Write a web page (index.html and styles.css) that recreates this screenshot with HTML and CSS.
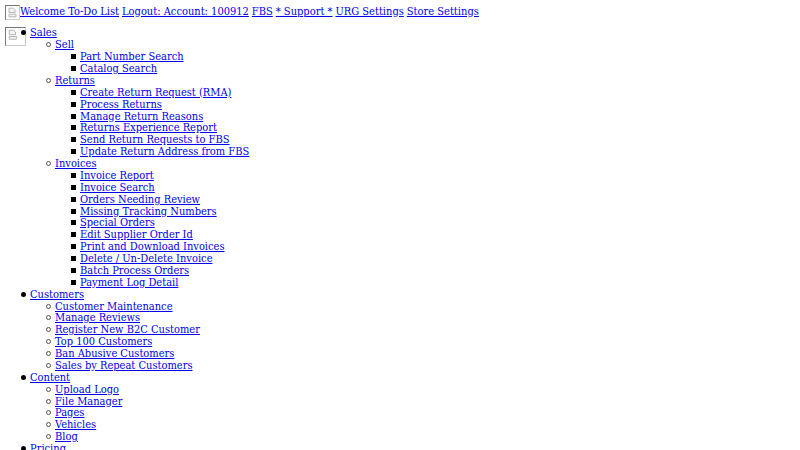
FILE: index.html
```html
<!DOCTYPE html>
<html lang="en">
<head>
  <meta charset="UTF-8">
  <title>Admin Menu</title>
  <link rel="stylesheet" href="styles.css">
</head>
<body>
  <svg class="defs" width="0" height="0">
    <symbol id="pic" viewBox="0 0 15 15">
      <path d="M3.5 2.5h5l2 2v3h-7z M3.5 9.5h8v3h-8z" fill="#f4f4f4" stroke="#aaa"/>
    </symbol>
  </svg>

  <div class="topbar">
    <svg class="broken small" viewBox="0 0 15 15"><use href="#pic"></use></svg>
    <a href="#">Welcome To-Do List</a>
    <a href="#">Logout: Account: 100912</a>
    <a href="#">FBS</a>
    <a href="#">* Support *</a>
    <a href="#">URG Settings</a>
    <a href="#">Store Settings</a>
  </div>

  <div class="menu">
    <svg class="broken large" viewBox="0 0 21 19"><use href="#pic" x="0" y="0" width="15" height="15"></use></svg>
    <ul class="level1">
      <li><a href="#">Sales</a>
        <ul class="level2">
          <li><a href="#">Sell</a>
            <ul class="level3">
              <li><a href="#">Part Number Search</a></li>
              <li><a href="#">Catalog Search</a></li>
            </ul>
          </li>
          <li><a href="#">Returns</a>
            <ul class="level3">
              <li><a href="#">Create Return Request (RMA)</a></li>
              <li><a href="#">Process Returns</a></li>
              <li><a href="#">Manage Return Reasons</a></li>
              <li><a href="#">Returns Experience Report</a></li>
              <li><a href="#">Send Return Requests to FBS</a></li>
              <li><a href="#">Update Return Address from FBS</a></li>
            </ul>
          </li>
          <li><a href="#">Invoices</a>
            <ul class="level3">
              <li><a href="#">Invoice Report</a></li>
              <li><a href="#">Invoice Search</a></li>
              <li><a href="#">Orders Needing Review</a></li>
              <li><a href="#">Missing Tracking Numbers</a></li>
              <li><a href="#">Special Orders</a></li>
              <li><a href="#">Edit Supplier Order Id</a></li>
              <li><a href="#">Print and Download Invoices</a></li>
              <li><a href="#">Delete / Un-Delete Invoice</a></li>
              <li><a href="#">Batch Process Orders</a></li>
              <li><a href="#">Payment Log Detail</a></li>
            </ul>
          </li>
        </ul>
      </li>
      <li><a href="#">Customers</a>
        <ul class="level2">
          <li><a href="#">Customer Maintenance</a></li>
          <li><a href="#">Manage Reviews</a></li>
          <li><a href="#">Register New B2C Customer</a></li>
          <li><a href="#">Top 100 Customers</a></li>
          <li><a href="#">Ban Abusive Customers</a></li>
          <li><a href="#">Sales by Repeat Customers</a></li>
        </ul>
      </li>
      <li><a href="#">Content</a>
        <ul class="level2">
          <li><a href="#">Upload Logo</a></li>
          <li><a href="#">File Manager</a></li>
          <li><a href="#">Pages</a></li>
          <li><a href="#">Vehicles</a></li>
          <li><a href="#">Blog</a></li>
        </ul>
      </li>
      <li><a href="#">Pricing</a></li>
    </ul>
  </div>
</body>
</html>
```

FILE: styles.css
```css
html {
  overflow: hidden;
}

body {
  margin: 0;
  padding: 5px;
  font-family: "DejaVu Serif", serif;
  font-size: 11px;
  font-stretch: condensed;
  line-height: 11.88px;
  color: #000;
  background-color: #fff;
}

a {
  color: #00e;
}

.defs {
  display: block;
}

.topbar {
  display: flex;
  align-items: center;
  gap: 3px;
  height: 15px;
  margin-bottom: 7.4px;
}

.topbar .small {
  margin-right: -3px;
}

.topbar a {
  position: relative;
  top: -1px;
}

.menu ul {
  margin: 0;
  padding-left: 25px;
  list-style: none;
}

.menu li {
  position: relative;
}

/* markers sit closer to the text than the browser's own */
.menu li::before {
  content: "";
  position: absolute;
  box-sizing: border-box;
  top: 3px;
  width: 5px;
  height: 5px;
}

.level1 > li::before {
  left: -9px;
  background-color: #000;
  border-radius: 50%;
}

.level2 > li::before {
  left: -9px;
  border: 1px solid #555;
  border-radius: 50%;
}

.level3 > li::before {
  left: -9px;
  background-color: #000;
}

.broken {
  flex: none;
  box-sizing: border-box;
  border-style: solid;
  border-width: 1px;
  border-color: #777 #ccc #ccc #777;
}

.small {
  width: 15px;
  height: 15px;
}

.large {
  float: left;
  width: 21px;
  height: 19px;
}
```
